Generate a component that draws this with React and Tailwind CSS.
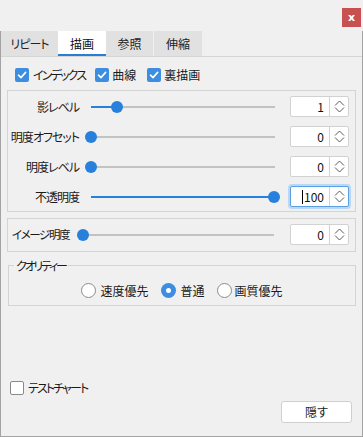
import React from "react";

const FONT = "font-['Noto_Sans_CJK_JP','Noto_Sans',sans-serif] [font-feature-settings:'palt']";

function Check({ checked }) {
  if (checked) {
    return (
      <span className="w-[14px] h-[14px] rounded-[2px] bg-[#3d8ee0] flex items-center justify-center shrink-0">
        <svg width="10" height="10" viewBox="0 0 10 10">
          <path d="M1.5 5.2 L4 7.6 L8.6 2.4" fill="none" stroke="white" strokeWidth="1.6" strokeLinecap="round" strokeLinejoin="round" />
        </svg>
      </span>
    );
  }
  return <span className="block w-[14px] h-[14px] rounded-[2px] bg-white border border-[#8a8a8a] shrink-0" />;
}

function Radio({ checked }) {
  if (checked) {
    return (
      <span className="w-[15px] h-[15px] rounded-full bg-[#3d8ee0] flex items-center justify-center shrink-0">
        <span className="block w-[5px] h-[5px] rounded-full bg-white" />
      </span>
    );
  }
  return <span className="block w-[15px] h-[15px] rounded-full bg-white border border-[#8a8a8a] shrink-0" />;
}

function Slider({ width, thumb }) {
  return (
    <div className="relative h-[12px] shrink-0" style={{ width }}>
      <div className="absolute left-[6px] right-[6px] top-[5px] h-[2px] bg-[#c2c2c2]" />
      <div className="absolute left-[6px] top-[5px] h-[2px] bg-[#2680dc]" style={{ width: thumb }} />
      <div className="absolute top-0 w-[12px] h-[12px] rounded-full bg-[#2680dc]" style={{ left: thumb }} />
    </div>
  );
}

function Chevron() {
  return (
    <svg width="11" height="13" viewBox="0 0 11 13">
      <path d="M1 5.5 L5.5 1 L10 5.5 M1 7.5 L5.5 12 L10 7.5" fill="none" stroke="#5a5a5a" strokeWidth="1" />
    </svg>
  );
}

function Spin({ value, focused }) {
  return (
    <div
      className={
        "w-[59px] h-[21px] bg-white rounded-[2px] flex shrink-0 " +
        (focused ? "border border-[#5a9fe4] shadow-[0_0_0_2px_#b9d8f5]" : "border border-[#d2d2d2]")
      }
    >
      <div className="flex-1 flex items-center justify-end pr-[5px] text-[12px] text-[#111]">
        {focused && <span className="block w-px h-[14px] bg-black mr-[1px]" />}
        {value}
      </div>
      <div className="w-[19px] border-l border-[#d2d2d2] flex items-center justify-center">
        <Chevron />
      </div>
    </div>
  );
}

function Row({ label, thumb, value, focused }) {
  return (
    <div className="h-[21px] flex items-center">
      <div className="w-[71px] text-right text-[12px] text-[#1a1a1a] leading-none whitespace-nowrap tracking-[-1px]">{label}</div>
      <div className="ml-[6px]">
        <Slider width={196} thumb={thumb} />
      </div>
      <div className="ml-[9px]">
        <Spin value={value} focused={focused} />
      </div>
    </div>
  );
}

export default function App() {
  return (
    <div className={"w-[363px] h-[437px] bg-[#f0f0f0] flex flex-col text-[#1a1a1a] " + FONT}>
      <div className="h-[31px] flex justify-end items-start pt-[8px] pr-[2px] shrink-0">
        <div className="w-[19px] h-[19px] bg-[#c75050] text-white text-[11px] font-bold flex items-center justify-center leading-none font-['DejaVu_Sans',sans-serif]">
          x
        </div>
      </div>
      <div className="flex-1 flex flex-col border-l border-r border-b border-[#a3a3a3]">
        <div className="h-[26px] flex border-b border-[#d6d6d6] shrink-0">
          <div className="w-[57px] bg-[#e1e1e1] flex items-center justify-center text-[12px] text-[#222] tracking-[-1px]">リピート</div>
          <div className="w-[48px] bg-white border-b-2 border-[#2b7cd3] flex items-center justify-center text-[12px] text-[#111] pt-[2px]">描画</div>
          <div className="w-[47px] bg-[#e1e1e1] flex items-center justify-center text-[12px] text-[#222]">参照</div>
          <div className="w-[48px] ml-px bg-[#e1e1e1] flex items-center justify-center text-[12px] text-[#222]">伸縮</div>
        </div>

        <div className="flex items-center mt-[11px] ml-[14px] h-[14px] text-[12px]">
          <Check checked />
          <span className="ml-[4px] tracking-[-1.8px] whitespace-nowrap">インデックス</span>
          <span className="ml-[10px] flex"><Check checked /></span>
          <span className="ml-[3px]">曲線</span>
          <span className="ml-[11px] flex"><Check checked /></span>
          <span className="ml-[3px]">裏描画</span>
        </div>

        <div className="ml-[6px] w-[349px] mt-[8px] border border-[#d4d4d4] pt-[5px] pb-[4px] flex flex-col gap-[9px]">
          <Row label="影レベル" thumb={26} value="1" />
          <Row label="明度オフセット" thumb={0} value="0" />
          <Row label="明度レベル" thumb={0} value="0" />
          <Row label="不透明度" thumb={183} value="100" focused />
        </div>

        <div className="ml-[6px] w-[349px] mt-[6px] border border-[#d4d4d4] pt-[5px] pb-[6px] pl-[4px] flex items-center">
          <div className="text-[11.5px] leading-none whitespace-nowrap w-[61px] tracking-[-1.4px]">イメージ明度</div>
          <div className="ml-[4px]">
            <Slider width={203} thumb={0} />
          </div>
          <div className="ml-[10px]">
            <Spin value="0" />
          </div>
        </div>

        <fieldset className="ml-[7px] w-[348px] mt-[5px] border border-[#d4d4d4] pb-[7px] min-w-0">
          <legend className="ml-[5px] px-[2px] text-[12px] leading-[17px] tracking-[-2.2px]">クオリティー</legend>
          <div className="mt-[9px] flex items-center justify-center text-[12px] h-[15px]">
            <Radio />
            <span className="ml-[4px]">速度優先</span>
            <span className="ml-[13px] flex"><Radio checked /></span>
            <span className="ml-[4px]">普通</span>
            <span className="ml-[12px] flex"><Radio /></span>
            <span className="ml-[3px]">画質優先</span>
          </div>
        </fieldset>

        <div className="mt-[75px] ml-[9px] flex items-center h-[14px] text-[12px]">
          <Check />
          <span className="ml-[4px] tracking-[-1.9px] whitespace-nowrap">テストチャート</span>
        </div>

        <div className="mt-[6px] flex justify-end pr-[10px]">
          <div className="w-[71px] h-[22px] bg-white border border-[#cfcfcf] rounded-[3px] flex items-center justify-center text-[12px]">
            隠す
          </div>
        </div>
      </div>
    </div>
  );
}
